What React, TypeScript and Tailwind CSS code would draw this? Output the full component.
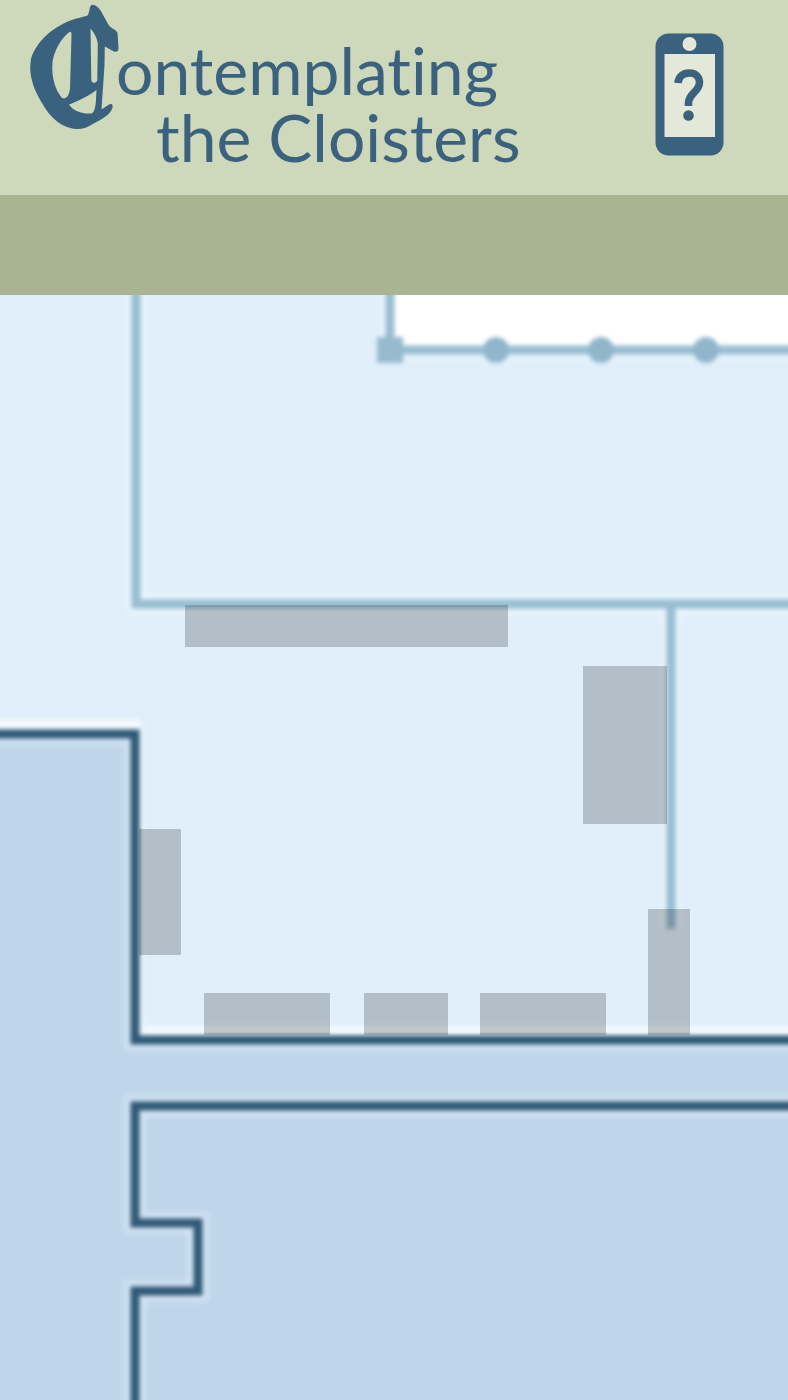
const hotspots = [
  { label: "North wall", place: "left-[185px] top-[310px] h-[42px] w-[323px]" },
  { label: "East wall", place: "left-[583px] top-[371px] h-[158px] w-[84px]" },
  { label: "West wall", place: "left-[139px] top-[534px] h-[126px] w-[42px]" },
  { label: "South wall, left", place: "left-[204px] top-[698px] h-[42px] w-[126px]" },
  { label: "South wall, centre", place: "left-[364px] top-[698px] h-[42px] w-[84px]" },
  { label: "South wall, right", place: "left-[480px] top-[698px] h-[42px] w-[126px]" },
  { label: "Doorway", place: "left-[648px] top-[614px] h-[126px] w-[42px]" },
];

const innerWalls = "M136 -20V309H1640M671 309V634M390 -20V55H1640";
const outerWalls =
  "M-20 439H135V745H1640M1640 811H135V928H198V996H135V1140";

function InitialC() {
  return (
    <svg viewBox="20 0 120 140" className="h-[140px] w-[120px] shrink-0" aria-hidden="true">
      <path
        fill="#3a617d"
        fillRule="evenodd"
        d="M92 4.700C97 5 100 9 102 13L108 24C111 29 116 29 117.500 33L118.500 48C118.500 52.500 115 52.500 112 50.500L104.800 46.500L104.500 65L101.500 109C105 108.500 107 104.500 111 104C113.500 104.500 113 108 111 111C107 117 98 121 91 125C84 130 75 130 67 127C53 122 44 108 37 94C31 82 29 70 31 59C36 42 52 28 69 21C77 18 84 17 87.500 15.500C90 12 89 6 92 4.700ZM69.500 32C61 38 54 51 52.500 62C51 78 56 91 62 98C66 99.500 69 96 70 89L71.500 35C71.500 32 71 31 69.500 32ZM90.500 28.500L91.300 80C92 84 96.500 83.500 97.300 80L97.800 44C97.500 38 93 31 90.500 28.500ZM96.500 90C87 97 78 101 69 104.500C73 111 82 114 91 113.500C94 113.500 95.500 108 96 100Z"
      />
    </svg>
  );
}

function PhoneHelp() {
  return (
    <svg viewBox="0 0 69 123" className="h-[123px] w-[69px]" aria-hidden="true">
      <rect x="0.500" y="0.500" width="68" height="122" rx="13" fill="#3a617d" />
      <circle cx="34.500" cy="11" r="7" fill="#e3e8d8" />
      <rect x="9.500" y="21" width="50.500" height="83" fill="#e3e8d8" />
      <path
        d="M23 50C23.500 43.500 28 40 34.500 40C41 40 44.500 44.500 44.500 49.500C44.500 59 33.500 60 33.500 70V73"
        fill="none"
        stroke="#3a617d"
        strokeWidth="7.500"
      />
      <circle cx="33.500" cy="82.500" r="5.300" fill="#3a617d" />
    </svg>
  );
}

function FloorPlan() {
  return (
    <svg
      viewBox="0 0 1600 1105"
      className="block h-[1105px] w-[1600px] max-w-none"
      role="img"
      aria-label="Floor plan"
    >
      <defs>
        <filter id="soft" filterUnits="userSpaceOnUse" x="-30" y="-30" width="1700" height="1200" colorInterpolationFilters="sRGB">
          <feGaussianBlur stdDeviation="2" />
        </filter>
        <filter id="glow" filterUnits="userSpaceOnUse" x="-30" y="-30" width="1700" height="1200" colorInterpolationFilters="sRGB">
          <feGaussianBlur stdDeviation="3" />
        </filter>
      </defs>
      <rect width="1600" height="1105" fill="#e0effa" />
      <path d="M0 439H135V745H1600V1105H0Z" fill="#bfd5ea" />
      <g fill="none" stroke="#f0fbff" filter="url(#glow)">
        <path d={innerWalls} strokeWidth="20" opacity="0.5" />
        <path d={outerWalls} strokeWidth="21" opacity="0.4" />
        <path d="M-20 429H140M144 736H1640" stroke="#ffffff" strokeWidth="8" opacity="0.8" />
      </g>
      <rect x="390" y="-10" width="1220" height="65" fill="#ffffff" />
      <g fill="none" filter="url(#soft)">
        <path d={innerWalls} stroke="#98bcd1" strokeWidth="9" />
        <path d={outerWalls} stroke="#2f5975" strokeWidth="9" />
        <rect x="377" y="42" width="26" height="26" fill="#96bace" />
        <g fill="#90b6cc">
          <circle cx="496" cy="55" r="13" />
          <circle cx="601" cy="55" r="13" />
          <circle cx="706" cy="55" r="13" />
          <circle cx="812" cy="55" r="13" />
        </g>
      </g>
    </svg>
  );
}

export default function App() {
  return (
    <div className="min-h-screen bg-[#e0effa] font-['Lato','Open_Sans',sans-serif]">
      <header className="flex h-[195px] items-start justify-between bg-[#ced8ba] pr-16 pl-5">
        <a href="#home" className="flex text-[#3a617d]">
          <InitialC />
          <h1 className="-ml-6 pt-9 text-[66px] leading-[67px] whitespace-nowrap [font-variant-ligatures:none]">
            <span className="block">ontemplating</span>
            <span className="block pl-10">the Cloisters</span>
          </h1>
        </a>
        <button type="button" aria-label="Help" className="mt-[33px]">
          <PhoneHelp />
        </button>
      </header>
      <div className="h-[100px] bg-[#a8b492]" />
      <main className="relative overflow-hidden">
        <FloorPlan />
        {hotspots.map((spot) => (
          <button
            key={spot.label}
            type="button"
            aria-label={spot.label}
            className={`absolute bg-black/20 ${spot.place}`}
          />
        ))}
      </main>
    </div>
  );
}
